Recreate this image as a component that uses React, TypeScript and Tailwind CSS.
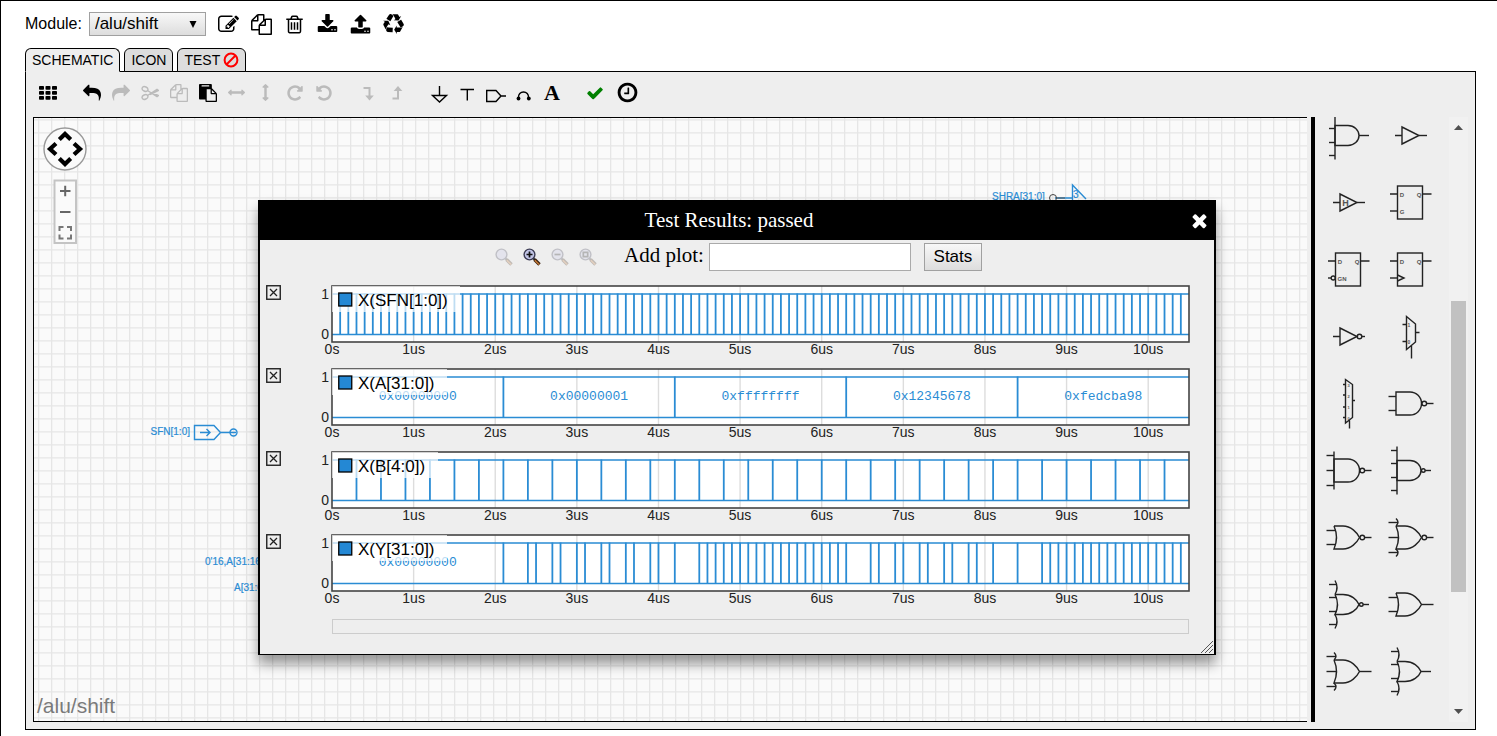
import React from "react";

const ICONS = {
  edit: "M888 1184l116-116-152-152-116 116v56h96v96h56zm440-720q-16-16-33 1l-350 350q-17 17-1 33t33-1l350-350q17-17 1-33zm80 594v190q0 119-84.5 203.5t-203.5 84.5h-832q-119 0-203.5-84.5t-84.5-203.5v-832q0-119 84.5-203.5t203.5-84.5h832q63 0 117 25 15 7 18 23 3 17-9 29l-49 49q-14 14-32 8-23-6-45-6h-832q-66 0-113 47t-47 113v832q0 66 47 113t113 47h832q66 0 113-47t47-113v-126q0-13 9-22l64-64q15-15 35-7t20 29zm-96-738l288 288-672 672h-288v-288zm444 132l-92 92-288-288 92-92q28-28 68-28t68 28l152 152q28 28 28 68t-28 68z",
  copy: "M1696 384q40 0 68 28t28 68v1216q0 40-28 68t-68 28h-960q-40 0-68-28t-28-68v-288h-544q-40 0-68-28t-28-68v-672q0-40 20-88t48-76l408-408q28-28 76-48t88-20h416q40 0 68 28t28 68v328q68-40 128-40h416zm-544 213l-299 299h299v-299zm-640-384l-299 299h299v-299zm196 647l316-316v-416h-384v416q0 40-28 68t-68 28h-416v640h512v-256q0-40 20-88t48-76zm956 804v-1152h-384v416q0 40-28 68t-68 28h-416v640h896z",
  trash: "M704 736v576q0 14-9 23t-23 9h-64q-14 0-23-9t-9-23v-576q0-14 9-23t23-9h64q14 0 23 9t9 23zm256 0v576q0 14-9 23t-23 9h-64q-14 0-23-9t-9-23v-576q0-14 9-23t23-9h64q14 0 23 9t9 23zm256 0v576q0 14-9 23t-23 9h-64q-14 0-23-9t-9-23v-576q0-14 9-23t23-9h64q14 0 23 9t9 23zm128 724v-948h-896v948q0 22 7 40.5t14.5 27 10.5 8.5h832q3 0 10.5-8.5t14.5-27 7-40.5zm-672-1076h448l-48-117q-7-9-17-11h-317q-10 2-17 11zm928 32v64q0 14-9 23t-23 9h-96v948q0 83-47 143.5t-113 60.5h-832q-66 0-113-58.5t-47-141.5v-952h-96q-14 0-23-9t-9-23v-64q0-14 9-23t23-9h309l70-167q15-37 54-63t79-26h320q40 0 79 26t54 63l70 167h309q14 0 23 9t9 23z",
  download: "M1344 1344q0-26-19-45t-45-19-45 19-19 45 19 45 45 19 45-19 19-45zm256 0q0-26-19-45t-45-19-45 19-19 45 19 45 45 19 45-19 19-45zm128-224v320q0 40-28 68t-68 28h-1472q-40 0-68-28t-28-68v-320q0-40 28-68t68-28h465l135 136q58 56 136 56t136-56l136-136h464q40 0 68 28t28 68zm-325-569q17 41-14 70l-448 448q-18 19-45 19t-45-19l-448-448q-31-29-14-70 17-39 59-39h256v-448q0-26 19-45t45-19h256q26 0 45 19t19 45v448h256q42 0 59 39z",
  upload: "M1344 1472q0-26-19-45t-45-19-45 19-19 45 19 45 45 19 45-19 19-45zm256 0q0-26-19-45t-45-19-45 19-19 45 19 45 45 19 45-19 19-45zm128-224v320q0 40-28 68t-68 28h-1472q-40 0-68-28t-28-68v-320q0-40 28-68t68-28h427q21 56 70.5 92t110.5 36h256q61 0 110.5-36t70.5-92h427q40 0 68 28t28 68zm-325-648q-17 40-59 40h-256v448q0 26-19 45t-45 19h-256q-26 0-45-19t-19-45v-448h-256q-42 0-59-40-17-39 14-69l448-448q18-19 45-19t45 19l448 448q31 30 14 69z",
  recycle: "M836 1169l-15 368-2 22-420-29q-36-3-67-31.5t-47-65.5q-11-27-14.5-55t4-65 12-55 21.5-64 19-53q78 12 509 28zm-387-586l180 379-147-92q-63 72-111.5 144.5t-72.5 125-39.5 94.5-18.5 63l-4 21-190-357q-17-26-18-56t6-47l8-18q35-63 114-188l-140-86zm1231 517l-188 359q-12 29-36.5 46.5t-43.5 20.5l-18 4q-71 7-219 12l8 164-230-367 211-362 7 173q170 16 283 5t170-33zm-785-924q-47 63-265 435l-317-187-19-12 225-356q20-31 60-45t80-10q24 2 48.5 12t42 21 41.5 33 36 34.5 36 39.5 32 35zm655 307l212 363q18 37 12.5 76t-27.5 74q-13 20-33 37t-38 28-48.5 22-47 16-51.5 14-46 12q-34-72-265-436l313-195zm-143-226l142-83-220 373-419-20 151-86q-34-89-75-166t-75.5-123.5-64.5-80-47-46.5l-17-13 405 1q31-3 58 10.5t39 28.5l11 15q39 61 112 190z",
  times: "M1490 1322q0 40-28 68l-136 136q-28 28-68 28t-68-28l-294-294-294 294q-28 28-68 28t-68-28l-136-136q-28-28-28-68t28-68l294-294-294-294q-28-28-28-68t28-68l136-136q28-28 68-28t68 28l294 294 294-294q28-28 68-28t68 28l136 136q28 28 28 68t-28 68l-294 294 294 294q28 28 28 68z",
  check: "M1671 566q0 40-28 68l-724 724-136 136q-28 28-68 28t-68-28l-136-136-362-362q-28-28-28-68t28-68l136-136q28-28 68-28t68 28l294 295 656-657q28-28 68-28t68 28l136 136q28 28 28 68z",
  share: "M1792 640q0 26-19 45l-512 512q-19 19-45 19t-45-19-19-45v-256h-224q-98 0-175.5 6t-154 21.5-133 42.5-105.5 69.5-80 101-48.5 138.5-17.5 181q0 55 5 123 0 6 2.5 23.5t2.5 26.5q0 15-8.5 25t-23.5 10q-16 0-28-17-7-9-13-22t-13.5-30-10.5-24q-127-285-127-451 0-199 53-333 162-403 875-403h224v-256q0-26 19-45t45-19 45 19l512 512q19 19 19 45z",
  paste: "M768 1664h896v-640h-416q-40 0-68-28t-28-68v-416h-384v1152zm256-1440v-64q0-13-9.5-22.5t-22.5-9.5h-704q-13 0-22.5 9.5t-9.5 22.5v64q0 13 9.5 22.5t22.5 9.5h704q13 0 22.5-9.5t9.5-22.5zm256 672h299l-299-299v299zm512 128v672q0 40-28 68t-68 28h-960q-40 0-68-28t-28-68v-160h-544q-40 0-68-28t-28-68v-1344q0-40 28-68t68-28h1088q40 0 68 28t28 68v328q21 13 36 28l408 408q28 28 48 76t20 88z",
  arrows: "M1792 896q0 26-19 45l-256 256q-19 19-45 19t-45-19-19-45v-128h-1024v128q0 26-19 45t-45 19-45-19l-256-256q-19-19-19-45t19-45l256-256q19-19 45-19t45 19 19 45v128h1024v-128q0-26 19-45t45-19 45 19l256 256q19 19 19 45z",
  rotate: "M1664 256v448q0 26-19 45t-45 19h-448q-42 0-59-40-17-39 14-69l138-138q-148-137-349-137-104 0-198.5 40.5t-163.5 109.5-109.5 163.5-40.5 198.5 40.5 198.5 109.5 163.5 163.5 109.5 198.5 40.5q119 0 225-52t179-147q7-10 23-12 15 0 25 9l137 138q9 8 9.5 20.5t-7.5 22.5q-109 132-264 204.5t-327 72.5q-156 0-298-61t-245-164-164-245-61-298 61-298 164-245 245-164 298-61q147 0 284.5 55.5t244.5 156.5l130-129q29-31 70-14 39 17 39 59z",
  clock: "M1024 544v448q0 14-9 23t-23 9h-320q-14 0-23-9t-9-23v-64q0-14 9-23t23-9h224v-352q0-14 9-23t23-9h64q14 0 23 9t9 23zm416 352q0-148-73-273t-198-198-273-73-273 73-198 198-73 273 73 273 198 198 273 73 273-73 198-198 73-273zm224 0q0 209-103 385.5t-279.5 279.5-385.5 103-385.5-103-279.5-279.5-103-385.5 103-385.5 279.5-279.5 385.5-103 385.5 103 279.5 279.5 103 385.5z",
};

function Icon({ name, size = 18, className = "" }: { name: keyof typeof ICONS; size?: number; className?: string }) {
  return (
    <svg width={size} height={size} viewBox="0 0 1792 1792" className={className} fill="currentColor" aria-hidden="true">
      <path d={ICONS[name]} />
    </svg>
  );
}

function Line({ children, size = 18 }: { children: React.ReactNode; size?: number }) {
  return (
    <svg width={size} height={size} viewBox={`0 0 ${size} ${size}`} fill="none" stroke="currentColor" strokeWidth="1.4" aria-hidden="true">
      {children}
    </svg>
  );
}

function Tool({ label, disabled, wide, children }: { label: string; disabled?: boolean; wide?: boolean; children: React.ReactNode }) {
  return (
    <button
      type="button"
      aria-label={label}
      disabled={disabled}
      className={`flex h-6 items-center justify-center ${wide ? "w-[29px]" : "w-7"} ${disabled ? "text-[#bbb]" : "text-black"}`}
    >
      {children}
    </button>
  );
}

function Toolbar() {
  return (
    <div className="flex h-[45px] items-center gap-[15px] pb-1">
      <Tool label="Parts grid" wide>
        <svg width="18" height="14" viewBox="0 0 18 14" fill="currentColor" aria-hidden="true">
          {[0, 6.5, 13].map((x) => [0, 5, 10].map((y) => <rect key={`${x}-${y}`} x={x} y={y} width="5" height="3.8" rx="0.8" />))}
        </svg>
      </Tool>
      <div className="flex">
        <Tool label="Undo" wide><Icon name="share" className="-scale-x-100" /></Tool>
        <Tool label="Redo" wide disabled><Icon name="share" /></Tool>
        <Tool label="Cut" wide disabled>
          <Line>
            <ellipse cx="4" cy="5" rx="3" ry="2.2" transform="rotate(25 4 5)" />
            <ellipse cx="4" cy="13" rx="3" ry="2.2" transform="rotate(-25 4 13)" />
            <path d="M6.5 6.5L16 12.6L17.4 11.6L11 8.4M6.5 11.5L16 5.4L17.4 6.4L9 10.6" />
          </Line>
        </Tool>
        <Tool label="Copy" wide disabled><Icon name="copy" /></Tool>
        <Tool label="Paste" wide><Icon name="paste" /></Tool>
        <Tool label="Flip horizontally" wide disabled><Icon name="arrows" size={17} /></Tool>
        <Tool label="Flip vertically" wide disabled><Icon name="arrows" size={17} className="rotate-90" /></Tool>
        <Tool label="Rotate clockwise" wide disabled><Icon name="rotate" /></Tool>
        <Tool label="Rotate counter-clockwise" wide disabled><Icon name="rotate" className="-scale-x-100" /></Tool>
      </div>
      <div className="flex">
        <Tool label="Descend" wide disabled>
          <Line><path d="M4.5 4H10.5V13" strokeWidth="2" /><path d="M6.2 11.5H14.8L10.5 16.5Z" fill="currentColor" stroke="none" /></Line>
        </Tool>
        <Tool label="Ascend" wide disabled>
          <Line><path d="M4.5 14.5H10V6" strokeWidth="2" /><path d="M5.7 7H14.3L10 2Z" fill="currentColor" stroke="none" /></Line>
        </Tool>
      </div>
      <div className="flex">
        <Tool label="Ground"><Line size={20}><path d="M9.5 3V12M2.5 12.5H16.5L9.5 19Z" /></Line></Tool>
        <Tool label="Supply"><Line><path d="M1.5 5.5H15M8.3 5.5V16.5" /></Line></Tool>
        <Tool label="Port">
          <Line size={20}><path d="M.7 7.5H10L15 13L10 18.5H.7ZM15 13H20" /></Line>
        </Tool>
        <Tool label="Jumper">
          <Line><path d="M3.5 14C2.5 6 14.5 6 13.5 14" /><circle cx="3.5" cy="14.5" r="1.9" fill="currentColor" stroke="none" /><circle cx="13.8" cy="14.5" r="1.9" fill="currentColor" stroke="none" /></Line>
        </Tool>
        <Tool label="Text"><span className="font-['Liberation_Serif',serif] text-[22px] leading-6 font-bold">A</span></Tool>
      </div>
      <div className="flex gap-1">
        <Tool label="Check"><Icon name="check" className="text-[#008000]" /></Tool>
        <Tool label="Simulate"><Icon name="clock" size={23} /></Tool>
      </div>
    </div>
  );
}

type GateProps = { kind: "and" | "or"; inputs: 2 | 3 | 4; invert?: boolean };

function Gate({ kind, inputs, invert }: GateProps) {
  const four = inputs === 4;
  const h = four ? 10 : 11.5;
  const left = four ? -13 : -14;
  const tip = four ? 11 : 11.5;
  const start = four ? -19 : -21.5;
  const end = four ? 21 : 23.5;
  const r = four ? 1.8 : 2.3;
  const reach = inputs === 2 ? h : inputs === 3 ? 19 : 24;
  const pins = inputs === 2 ? [-7, 7] : inputs === 3 ? [-15, 0, 15] : [-20, -7, 7, 20];
  const or = kind === "or";
  const body = or
    ? `M${left} ${-h}H-5C3 ${-h} 9 -5 ${tip} 0C9 5 3 ${h} -5 ${h}H${left}Q${left + 5} 0 ${left} ${-h}`
    : `M${left} ${-h}H0A${tip} ${h} 0 0 1 0 ${h}H${left}Z`;
  return (
    <>
      <path d={body} />
      {reach > h && !or && <path d={`M${left} ${-reach}V${reach}`} />}
      {reach > h && or && (
        <path d={`M${left} ${-reach}Q${left + 4} ${-(reach + h) / 2} ${left} ${-h}M${left} ${reach}Q${left + 4} ${(reach + h) / 2} ${left} ${h}`} />
      )}
      {pins.map((y) => <path key={y} d={`M${start} ${y}H${or ? left + 2 : left}`} />)}
      {invert && <circle cx={tip + r + 0.5} cy="0" r={r} />}
      <path d={`M${invert ? tip + 2 * r + 0.5 : tip} 0H${end}`} />
    </>
  );
}

function Letter({ x, y, size = 6, children }: { x: number; y: number; size?: number; children: string }) {
  return <text x={x} y={y} fontSize={size} textAnchor="middle" fill="#555" stroke="none" fontWeight="bold">{children}</text>;
}

function Buffer({ invert, hold }: { invert?: boolean; hold?: boolean }) {
  return (
    <>
      <path d="M-15 0H-8V-8.5L9 0L-8 8.5V0" />
      {invert && <circle cx="11.5" cy="0" r="2.3" />}
      <path d={invert ? "M14 0H17" : "M9 0H17"} />
      {hold && <Letter x={-2.5} y={3} size={9}>H</Letter>}
    </>
  );
}

function Register({ kind }: { kind: "g" | "gn" | "clk" }) {
  return (
    <>
      <rect x="-12.5" y="-16.5" width="25" height="33" />
      <path d="M-20 -8.5H-12.5M12.5 -8.5H21.5" />
      <path d={kind === "gn" ? "M-20 8.5H-17" : "M-20 8.5H-12.5"} />
      {kind === "gn" && <circle cx="-14.8" cy="8.5" r="2" />}
      {kind === "clk" && <path d="M-12.5 5.5L-6 8.5L-12.5 11.5" />}
      <Letter x={-8} y={-6}>D</Letter>
      <Letter x={9} y={-6}>Q</Letter>
      {kind === "g" && <Letter x={-8} y={11}>G</Letter>}
      {kind === "gn" && <Letter x={-6} y={11}>GN</Letter>}
    </>
  );
}

const PARTS: { name: string; art: React.ReactNode }[] = [
  { name: "and4", art: <Gate kind="and" inputs={4} /> },
  { name: "buffer", art: <Buffer /> },
  { name: "buffer high", art: <Buffer hold /> },
  { name: "latch", art: <Register kind="g" /> },
  { name: "latch gn", art: <Register kind="gn" /> },
  { name: "register", art: <Register kind="clk" /> },
  { name: "inverter", art: <Buffer invert /> },
  {
    name: "mux2",
    art: (
      <>
        <path d="M-3.5 -20L5.5 -12.5V5.5L-3.5 13ZM-7.5 -12H-3.5M-7.5 5H-3.5M5.5 -4H9.5M1.5 9V22" />
        <Letter x={-1} y={-10} size={5}>1</Letter>
        <Letter x={-1} y={7} size={5}>0</Letter>
      </>
    ),
  },
  {
    name: "mux4",
    art: (
      <>
        <path d="M-2.5 -24L4.5 -19V14L-2.5 19.5ZM-5 -19H-2.5M-5 -8.5H-2.5M-5 3.5H-2.5M-5 14H-2.5M4.5 -3H7M1.5 17V25" />
        {["3", "2", "1", "0"].map((n, i) => <Letter key={n} x={0.5} y={-17 + i * 11} size={4}>{n}</Letter>)}
      </>
    ),
  },
  { name: "nand2", art: <Gate kind="and" inputs={2} invert /> },
  { name: "nand3", art: <Gate kind="and" inputs={3} invert /> },
  { name: "nand4", art: <Gate kind="and" inputs={4} invert /> },
  { name: "nor2", art: <Gate kind="or" inputs={2} invert /> },
  { name: "nor3", art: <Gate kind="or" inputs={3} invert /> },
  { name: "nor4", art: <Gate kind="or" inputs={4} invert /> },
  { name: "or2", art: <Gate kind="or" inputs={2} /> },
  { name: "or3", art: <Gate kind="or" inputs={3} /> },
  { name: "or4", art: <Gate kind="or" inputs={4} /> },
];

function PartsBin() {
  return (
    <aside className="flex w-[157px] shrink-0 overflow-hidden border-l-4 border-black">
      <div className="h-0 flex-1">
        <div className="-mt-[15px] grid grid-cols-2 pr-2 pl-[2px]">
          {PARTS.map((part) => (
            <button key={part.name} type="button" aria-label={part.name} className="flex h-[67px] justify-center">
              <svg width="62" height="67" viewBox="-31 -33.5 62 67" fill="none" stroke="#222" strokeWidth="1.4" fontFamily="Liberation Sans, sans-serif">
                {part.art}
              </svg>
            </button>
          ))}
        </div>
      </div>
      <div className="flex w-[19px] flex-col items-center bg-[#f1f1f1] py-2">
        <svg width="9" height="5" viewBox="0 0 9 5" fill="#505050"><path d="M0 5L4.5 0L9 5Z" /></svg>
        <div className="mt-[171px] mb-auto h-[291px] w-[15px] bg-[#c1c1c1]" />
        <svg width="9" height="5" viewBox="0 0 9 5" fill="#505050"><path d="M0 0H9L4.5 5Z" /></svg>
      </div>
    </aside>
  );
}

function Canvas() {
  return (
    <div className="relative min-w-0 flex-1 overflow-hidden border-y border-l border-black bg-[#fafafa]">
      <svg className="absolute inset-0 h-full w-full" fontFamily="Liberation Sans, sans-serif" fontSize="10">
        <defs>
          <pattern id="grid" width="13" height="13" x="4" y="1" patternUnits="userSpaceOnUse">
            <path d="M.6 0V13M0 .9H13" stroke="#e6e6e6" strokeWidth="1.4" />
          </pattern>
        </defs>
        <rect width="100%" height="100%" fill="url(#grid)" />
        <g transform="translate(-34 -118)" fill="none">
          <circle cx="65" cy="149" r="21" fill="#fafafa" stroke="#999" strokeWidth="1.4" />
          <path d="M59.3 139.5L65 134L70.7 139.5M59.3 158.5L65 164L70.7 158.5M56 143.5L50 149L56 154.5M74 143.5L80 149L74 154.5" stroke="#000" strokeWidth="4.2" />
          <rect x="54.5" y="180.5" width="21.5" height="62.5" fill="#fafafa" stroke="#c4c4c4" strokeWidth="2" />
          <path d="M60 191H70.5M65.2 185.8V196.2M60 212H70.5" stroke="#666" strokeWidth="2" />
          <path d="M59.5 231V227H63.5M67 227H71V231M71 234.5V238.5H67M63.5 238.5H59.5V234.5" stroke="#777" strokeWidth="2" />
          <g stroke="#2a8cd4" strokeWidth="1.4">
            <path d="M194.5 425.5H214L220.5 432.5L214 439.5H194.5ZM220.5 432.5H236M200 432.5H210M206.5 429L210 432.5L206.5 436" />
            <circle cx="233.5" cy="432.5" r="3.5" />
            <path d="M1055 198H1072M1072.5 205V185L1086 199" />
          </g>
          <circle cx="1053" cy="198" r="3.5" stroke="#444" />
          <path d="M1056 198H1065" stroke="#555" />
          <g fill="#2a8cd4" stroke="#2a8cd4" strokeWidth="0.2">
            <text x="190" y="435" textAnchor="end">SFN[1:0]</text>
            <text x="205" y="565">0'16,A[31:16]</text>
            <text x="234" y="591">A[31:0]</text>
            <text x="992" y="200">SHRA[31:0]</text>
            <text x="1073" y="198">3</text>
          </g>
        </g>
      </svg>
      <div className="absolute bottom-0 left-[3px] text-[21px] leading-[30px] text-[#7a7a7a]">/alu/shift</div>
    </div>
  );
}

const PX_PER_US = 857 / 10.5;
const every = (step: number, from = step, to = 10.45) => {
  const out: number[] = [];
  for (let i = 0; from + i * step < to; i++) out.push(from + i * step);
  return out;
};

type Wave = { name: string; legend: number; edges: number[]; values?: [number, string][] };

const WAVES: Wave[] = [
  { name: "X(SFN[1:0])", legend: 129, edges: every(0.1) },
  {
    name: "X(A[31:0])",
    legend: 116,
    edges: every(2.1),
    values: [[1.05, "0x00000000"], [3.15, "0x00000001"], [5.25, "0xffffffff"], [7.35, "0x12345678"], [9.45, "0xfedcba98"]],
  },
  { name: "X(B[4:0])", legend: 107, edges: every(0.3) },
  {
    name: "X(Y[31:0])",
    legend: 116,
    edges: [
      2.1, 2.4, 2.5, 2.7, 2.8, 3, 3.1, 3.3, 3.4, 3.6, 3.7, 3.9, 4, 4.2,
      ...every(0.1, 4.5, 6.35),
      6.6, 6.7, 6.9, 7, 7.2, 7.3, 7.5, 7.6, 7.8, 7.9, 8.1, 8.4,
      ...every(0.1, 8.7),
    ],
    values: [[1.05, "0x00000000"]],
  },
];

function Plot({ wave }: { wave: Wave }) {
  const ticks = Array.from({ length: 11 }, (_, i) => i);
  return (
    <div className="flex h-[83px] items-start">
      <button type="button" aria-label={`Remove ${wave.name}`} className="mt-[2px] ml-[6px]">
        <svg width="15" height="15" viewBox="0 0 15 15" fill="none" stroke="#222">
          <rect x="0.75" y="0.75" width="13.5" height="13.5" strokeWidth="1.4" />
          <path d="M4 4L11 11M11 4L4 11" strokeWidth="1.3" />
        </svg>
      </button>
      <svg width="905" height="83" viewBox="-31 -3 905 83" className="ml-5" fontFamily="Liberation Sans, sans-serif" fontSize="14">
        <rect x="0" y="0" width="857" height="56" fill="#fff" />
        {ticks.slice(1).map((t) => <path key={t} d={`M${t * PX_PER_US} 0V56`} stroke="#ddd" strokeWidth="1.4" />)}
        <g stroke="#2a8cd4" fill="none">
          <path d="M0 8H857M0 48.5H857" strokeWidth="1.5" />
          {wave.edges.map((t) => <path key={t} d={`M${t * PX_PER_US} 7.5V49`} strokeWidth="1.8" />)}
        </g>
        <g fill="#2a8cd4" fontFamily="Liberation Mono, monospace" fontSize="13" textAnchor="middle">
          {wave.values?.map(([t, v]) => <text key={t} x={t * PX_PER_US} y="31">{v}</text>)}
        </g>
        <rect x="0" y="0" width="857" height="56" fill="none" stroke="#444" strokeWidth="1.6" />
        <rect x="0" y="0" width={wave.legend - 1} height="26" fill="#fff" opacity="0.7" />
        <rect x="6.75" y="7" width="13" height="13" fill="#2488d4" stroke="#000" strokeWidth="1.3" />
        <text x="26" y="20" fontSize="17">{wave.name}</text>
        <g fill="#222">
          <text x="-3" y="13" textAnchor="end">1</text>
          <text x="-3" y="53" textAnchor="end">0</text>
          {ticks.map((t) => <text key={t} x={t * PX_PER_US} y="68" textAnchor="middle">{t ? `${t}us` : "0s"}</text>)}
        </g>
      </svg>
    </div>
  );
}

function Magnifier({ label, mark, active }: { label: string; mark?: string; active?: boolean }) {
  return (
    <button type="button" aria-label={label} disabled={!active} className={`w-7 ${active ? "" : "opacity-25"}`}>
      <svg width="18" height="18" viewBox="0 0 18 18" fill="none" className="mx-auto">
        <path d="M10 10L12 12" stroke="#222" strokeWidth="2" />
        <path d="M11.5 11.5L16.5 16.5" stroke="#3a2210" strokeWidth="3.4" />
        <path d="M11.8 12.2L16.2 16.6" stroke="#c87a35" strokeWidth="1.4" />
        <circle cx="6.5" cy="6.5" r="5.4" fill="#c3c6e8" stroke="#3c3c54" strokeWidth="1.4" />
        {mark && <path d={mark} stroke="#111" strokeWidth="1.7" />}
      </svg>
    </button>
  );
}

function ResultsDialog() {
  return (
    <section role="dialog" aria-labelledby="results-title" className="absolute top-[199px] left-[257px] w-[958px] border-x-2 border-b border-black bg-[#eee] shadow-[0_9px_12px_rgba(0,0,0,0.4)]">
      <header className="relative flex h-10 items-center justify-center bg-black pr-4 text-white">
        <h2 id="results-title" className="font-['Liberation_Serif',serif] text-[21px] leading-7">Test Results: passed</h2>
        <button type="button" aria-label="Close" className="absolute right-1"><Icon name="times" size={21} /></button>
      </header>
      <div className="flex h-[34px] items-center pl-[230px]">
        <div className="flex">
          <Magnifier label="Reset zoom" />
          <Magnifier label="Zoom in" active mark="M3.5 6.5H9.5M6.5 3.5V9.5" />
          <Magnifier label="Zoom out" mark="M3.5 6.5H9.5" />
          <Magnifier label="Zoom to selection" mark="M4.3 4.3H8.7V8.7H4.3Z" />
        </div>
        <label htmlFor="add-plot" className="ml-[22px] pb-1 font-['Liberation_Serif',serif] text-[21px] leading-7">Add plot:</label>
        <input id="add-plot" type="text" className="ml-[5px] h-7 w-[202px] border border-[#aaa] bg-white px-1 text-[17px]" />
        <button type="button" className="ml-[13px] h-7 w-[58px] border border-[#a0a0a0] bg-linear-to-b from-[#f8f8f8] to-[#ddd] text-[17px] leading-6">Stats</button>
      </div>
      <div className="mt-[9px]">
        {WAVES.map((wave) => <Plot key={wave.name} wave={wave} />)}
      </div>
      <div className="mt-1 mr-[25px] mb-5 ml-[72px] h-[15px] border border-[#ccc]" />
      <svg className="absolute right-0 bottom-0" width="14" height="14" viewBox="0 0 14 14" stroke="#555" strokeWidth="1">
        <path d="M1 13L13 1M5 13L13 5M9 13L13 9" />
      </svg>
    </section>
  );
}

function Tab({ active, children }: { active?: boolean; children: React.ReactNode }) {
  return (
    <button
      type="button"
      role="tab"
      aria-selected={!!active}
      className={`flex h-6 items-center gap-[3px] rounded-t-md border border-black px-[6px] pb-px text-sm leading-5 ${active ? "border-b-[#eee] bg-[#eee]" : "bg-[#ddd]"}`}
    >
      {children}
    </button>
  );
}

function HeaderButton({ label, children }: { label: string; children: React.ReactNode }) {
  return <button type="button" aria-label={label} className="flex h-6 w-[33px] items-center justify-center">{children}</button>;
}

export default function App() {
  return (
    <div className="relative flex min-h-screen flex-col border-t border-l border-black bg-white pr-[21px] pb-[6px] pl-6 font-['Liberation_Sans',Arial,sans-serif] text-black">
      <header className="flex h-[47px] items-start pt-[11px]">
        <label htmlFor="module" className="text-base leading-6">Module:</label>
        <div className="relative ml-[7px]">
          <select id="module" className="block h-6 w-[117px] appearance-none border border-[#a0a0a0] bg-linear-to-b from-[#f8f8f8] to-[#ddd] pl-[5px] text-[17px] leading-5">
            <option>/alu/shift</option>
          </select>
          <svg className="pointer-events-none absolute top-[9px] right-[9px]" width="8" height="7" viewBox="0 0 8 7"><path d="M0.5 0H7.5L4 7Z" /></svg>
        </div>
        <div className="ml-[6px] flex">
          <HeaderButton label="Edit module"><Icon name="edit" size={21} /></HeaderButton>
          <HeaderButton label="Copy module"><Icon name="copy" size={21} /></HeaderButton>
          <HeaderButton label="Delete module"><Icon name="trash" size={21} /></HeaderButton>
          <HeaderButton label="Download"><Icon name="download" size={21} /></HeaderButton>
          <HeaderButton label="Upload"><Icon name="upload" size={21} /></HeaderButton>
          <HeaderButton label="Recycle"><Icon name="recycle" size={21} /></HeaderButton>
        </div>
      </header>
      <div role="tablist" className="z-10 -mb-px flex gap-1">
        <Tab active>SCHEMATIC</Tab>
        <Tab>ICON</Tab>
        <Tab>
          TEST
          <svg width="16" height="16" viewBox="0 0 16 16" fill="none" stroke="#f00" strokeWidth="2"><circle cx="8" cy="8" r="6.4" /><path d="M3.5 12.5L12.5 3.5" /></svg>
        </Tab>
      </div>
      <main className="flex flex-1 flex-col border border-black bg-[#eee] px-[7px] pb-[7px]">
        <Toolbar />
        <div className="flex min-h-[604px] flex-1 gap-1">
          <Canvas />
          <PartsBin />
        </div>
      </main>
      <ResultsDialog />
    </div>
  );
}
